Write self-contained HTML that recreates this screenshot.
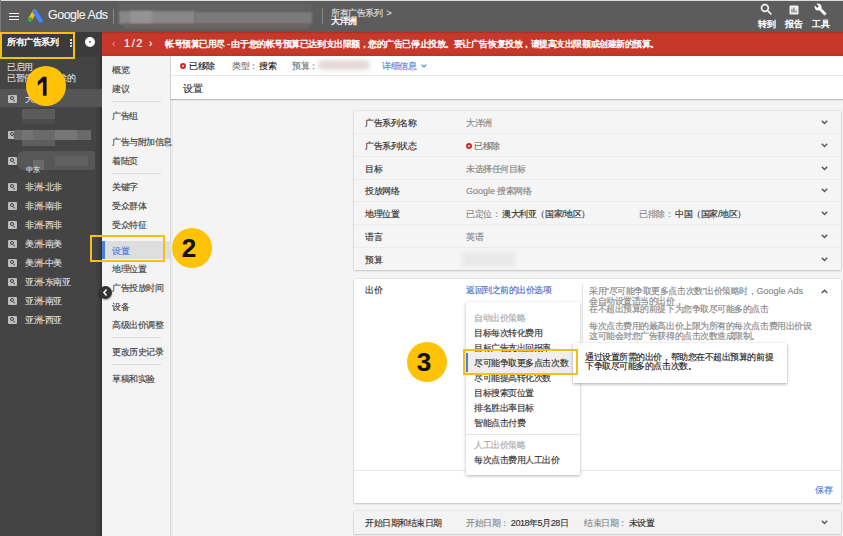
<!DOCTYPE html>
<html><head><meta charset="utf-8">
<style>
*{margin:0;padding:0;box-sizing:border-box}
html,body{width:843px;height:536px;overflow:hidden;background:#f4f4f4}
body{position:relative;font-family:"Liberation Sans",sans-serif;font-size:9px;letter-spacing:-.45px;color:#333;line-height:10.6px;-webkit-text-stroke:.15px currentColor}
.a{position:absolute;white-space:nowrap}
#top{left:0;top:0;width:843px;height:32px;background:#5c5c5c;border-top:1px solid #dedede}
#side{left:0;top:32px;width:102px;height:504px;background:linear-gradient(90deg,#444 0,#444 96px,#383838 101px,#2e2e2e 102px)}
#sidehead{left:0;top:32px;width:102px;height:25px;background:#3b3b3b}
#banner{left:102px;top:32px;width:741px;height:24px;background:linear-gradient(#aa2c20 0,#c6392a 2px,#c6392a 20px,#bd3226 24px);color:#fff}
#nav{left:102px;top:56px;width:69px;height:480px;background:#f4f4f4;border-right:1px solid #dadada;box-shadow:2px 0 0 #ebebeb}
.navi{left:112px;color:#444}
.sep{height:1px;background:#dcdcdc}
.ic{left:8px;width:9px;height:8px;background:#bdbdbd;border-radius:1px}
.ic:after{content:"";position:absolute;left:2.3px;top:1.3px;width:4px;height:4px;border:1.1px solid #444;border-radius:50%;box-sizing:border-box}
.ic:before{content:"";position:absolute;left:5.3px;top:5.3px;width:2px;height:1.3px;background:#444;transform:rotate(45deg)}
.si{left:25px;color:#ddd}
.circ{width:40px;height:40px;border-radius:50%;background:#fec306;color:#111;font-weight:bold;font-size:26px;letter-spacing:0;text-align:center;line-height:40px;text-indent:-6px}
.ybox{border:2px solid #f5bf14}
.row{left:354px;width:487px;height:23px;border-bottom:1px solid #ebebeb}
.lab{left:11px;top:7px;color:#333}
.val{left:112px;top:7px;color:#888}
.chev{right:12px;top:8px;width:6px;height:6px;border-right:1.5px solid #666;border-bottom:1.5px solid #666;transform:rotate(45deg)}
.blur{filter:blur(2px)}
</style></head><body>
<!-- TOP BAR -->
<div id="top" class="a"></div>
<div class="a" style="left:9px;top:13px;width:10px;height:1.3px;background:#eee"></div>
<div class="a" style="left:9px;top:15.8px;width:10px;height:1.3px;background:#eee"></div>
<div class="a" style="left:9px;top:18.6px;width:10px;height:1.3px;background:#eee"></div>
<svg class="a" style="left:26px;top:9px" width="18" height="14" viewBox="0 0 18 14">
 <path d="M8.6 2.6 L4.2 10" stroke="#fbbc04" stroke-width="4.4" stroke-linecap="round"/>
 <path d="M8.6 2.6 L14.6 11.4" stroke="#4285f4" stroke-width="4.4" stroke-linecap="round"/>
 <circle cx="4" cy="10.6" r="2.3" fill="#34a853"/>
</svg>
<div class="a" style="left:48px;top:10px;font-size:12.4px;color:#eee;letter-spacing:-0.45px">Google Ads</div>
<div class="a" style="left:113px;top:9px;width:1px;height:15px;background:#888"></div>
<div class="a" style="left:119px;top:3px;width:193px;height:8px;background:#636363;filter:blur(.8px)"></div>
<div class="a" style="left:119px;top:11px;width:76px;height:13px;background:#888;filter:blur(.8px)"></div>
<div class="a" style="left:130px;top:11px;width:22px;height:13px;background:#939393;filter:blur(.8px)"></div>
<div class="a" style="left:195px;top:12px;width:117px;height:12px;background:#7b7b7b;filter:blur(.8px)"></div>
<div class="a" style="left:124px;top:24px;width:186px;height:5px;background:#6e6363;filter:blur(.8px)"></div>
<div class="a" style="left:322px;top:8px;width:1px;height:16px;background:#888"></div>
<div class="a" style="width:60.2px;text-align-last:justify;left:331px;top:8px;color:#ddd">所有广告系列&nbsp;&nbsp;&gt;</div>
<div class="a" style="width:25.7px;text-align-last:justify;left:331px;top:16px;color:#fff;-webkit-text-stroke:.4px #fff">大洋洲</div>
<!-- right icons -->
<svg class="a" style="left:759px;top:2px" width="15" height="15" viewBox="0 0 24 24"><path fill="#fff" stroke="#fff" stroke-width=".6" d="M15.5 14h-.79l-.28-.27C15.41 12.59 16 11.11 16 9.5 16 5.91 13.09 3 9.5 3S3 5.91 3 9.5 5.91 16 9.5 16c1.61 0 3.09-.59 4.230-1.57l.27.28v.79l5 4.99L20.49 19l-4.99-5zm-6 0C7.010 14 5 11.99 5 9.5S7.01 5 9.5 5 14 7.01 14 9.5 11.99 14 9.5 14z"/></svg>
<svg class="a" style="left:788px;top:4px" width="12" height="12" viewBox="0 0 24 24"><path fill="#eee" d="M19 3H5c-1.1 0-2 .9-2 2v14c0 1.1.9 2 2 2h14c1.1 0 2-.9 2-2V5c0-1.1-.9-2-2-2zM9 17H7v-7h2v7zm4 0h-2V7h2v10zm4 0h-2v-4h2v4z"/></svg>
<svg class="a" style="left:814px;top:3px" width="13" height="13" viewBox="0 0 24 24"><path fill="#fff" d="M22.7 19l-9.1-9.1c.9-2.3.4-5-1.5-6.9-2-2-5-2.4-7.4-1.3L9 6 6 9 1.6 4.7C.4 7.1.9 10.1 2.9 12.1c1.900 1.9 4.6 2.4 6.9 1.5l9.1 9.1c.4.4 1 .4 1.4 0l2.3-2.3c.5-.4.5-1.1.1-1.4z"/></svg>
<div class="a" style="width:17.1px;text-align-last:justify;left:758px;top:19px;color:#fff;-webkit-text-stroke:.4px #fff">转到</div>
<div class="a" style="width:17.1px;text-align-last:justify;left:785px;top:19px;color:#fff;-webkit-text-stroke:.4px #fff">报告</div>
<div class="a" style="width:17.1px;text-align-last:justify;left:812px;top:19px;color:#fff;-webkit-text-stroke:.4px #fff">工具</div>

<!-- SIDEBAR -->
<div id="side" class="a"></div>
<div id="sidehead" class="a"></div>
<div class="a" style="width:51.3px;text-align-last:justify;left:7px;top:37px;color:#fff;-webkit-text-stroke:.4px #fff">所有广告系列</div>
<div class="a" style="left:70px;top:39px;width:2px;height:2px;background:#ddd;box-shadow:0 3px #ddd,0 6px #ddd"></div>
<div class="a" style="left:85px;top:37px;width:10px;height:10px;border-radius:50%;background:#fff"></div>
<div class="a" style="left:89px;top:41px;width:2px;height:2px;background:#666;border-radius:50%"></div>
<div class="a ybox" style="left:0;top:32px;width:75px;height:27px"></div>
<div class="a" style="left:0;top:0;width:1px;height:32px;background:#7a7a7a"></div>

<div class="a si" style="width:25.7px;text-align-last:justify;left:7px;top:62px">已启用</div>
<div class="a si" style="width:68.4px;text-align-last:justify;left:7px;top:73px">已暂停和已移除的</div>
<div class="a" style="left:0;top:89px;width:102px;height:18px;background:#555"></div>
<div class="a ic" style="top:95px"></div>
<div class="a si" style="width:25.7px;text-align-last:justify;top:94px">大洋洲</div>
<div class="a" style="left:22px;top:109px;width:33px;height:10px;background:#5b5b5b;filter:blur(.6px)"></div>
<div class="a" style="left:22px;top:119px;width:33px;height:5px;background:#4c4c4c;filter:blur(.6px)"></div>
<div class="a ic" style="top:131px"></div>
<div class="a" style="left:14px;top:130px;width:77px;height:10px;background:#6a6a6a;filter:blur(.6px)"></div>
<div class="a" style="left:22px;top:130px;width:11px;height:10px;background:#737373;filter:blur(.6px)"></div>
<div class="a" style="left:55px;top:130px;width:22px;height:10px;background:#767676;filter:blur(.6px)"></div>
<div class="a" style="left:22px;top:140px;width:33px;height:6px;background:#5e5e5e;filter:blur(.6px)"></div>
<div class="a ic" style="top:157px"></div>
<div class="a" style="left:17px;top:151px;width:78px;height:19px;background:#575757;border-radius:7px 2px 2px 7px;filter:blur(.6px)"></div>
<div class="a" style="left:33px;top:160px;width:11px;height:10px;background:#6a6a6a;filter:blur(.6px)"></div>
<div class="a" style="left:55px;top:156px;width:33px;height:10px;background:#606060;filter:blur(.6px)"></div>
<div class="a si" style="width:13.1px;text-align-last:justify;left:26px;top:165px;font-size:7px">中东</div>
<div class="a ic" style="top:183px"></div><div class="a si" style="width:36.8px;text-align-last:justify;top:182px">非洲-北非</div>
<div class="a ic" style="top:202px"></div><div class="a si" style="width:36.8px;text-align-last:justify;top:201px">非洲-南非</div>
<div class="a ic" style="top:221px"></div><div class="a si" style="width:36.8px;text-align-last:justify;top:220px">非洲-西非</div>
<div class="a ic" style="top:240px"></div><div class="a si" style="width:36.8px;text-align-last:justify;top:239px">美洲-南美</div>
<div class="a ic" style="top:259px"></div><div class="a si" style="width:36.8px;text-align-last:justify;top:258px">美洲-中美</div>
<div class="a ic" style="top:278px"></div><div class="a si" style="width:45.3px;text-align-last:justify;top:277px">亚洲-东南亚</div>
<div class="a ic" style="top:297px"></div><div class="a si" style="width:36.8px;text-align-last:justify;top:296px">亚洲-南亚</div>
<div class="a ic" style="top:316px"></div><div class="a si" style="width:36.8px;text-align-last:justify;top:315px">亚洲-西亚</div>
<div class="a circ" style="left:26px;top:66px"><svg class="a" style="left:0;top:0" width="40" height="40" viewBox="0 0 40 40"><path d="M16.9 10.7 L20.6 10.7 L20.6 29.8 L16.9 29.8 L16.9 15.6 L11.8 19.7 L11.8 15.4 Z" fill="#111"/></svg></div>

<!-- BANNER -->
<div id="banner" class="a"></div>
<div class="a" style="left:112px;top:39px;color:#e88;font-size:10px;letter-spacing:0">&lsaquo;</div>
<div class="a" style="left:124px;top:38px;color:#fff;font-size:11px;letter-spacing:1.6px">1/2</div>
<div class="a" style="left:149px;top:39px;color:#fff;font-size:10px;letter-spacing:0">&rsaquo;</div>
<div class="a" style="width:494.0px;text-align-last:justify;left:165px;top:39px;color:#fff;-webkit-text-stroke:.4px #fff">帐号预算已用尽 - 由于您的帐号预算已达到支出限额，您的广告已停止投放。要让广告恢复投放，请提高支出限额或创建新的预算。</div>

<!-- NAV -->
<div id="nav" class="a"></div>
<div class="a navi" style="width:17.1px;text-align-last:justify;top:65px">概览</div>
<div class="a navi" style="width:17.1px;text-align-last:justify;top:84px">建议</div>
<div class="a sep" style="left:112px;top:101px;width:49px"></div>
<div class="a navi" style="width:25.7px;text-align-last:justify;top:111px">广告组</div>
<div class="a navi" style="width:59.9px;text-align-last:justify;top:137px">广告与附加信息</div>
<div class="a navi" style="width:25.7px;text-align-last:justify;top:156px">着陆页</div>
<div class="a sep" style="left:112px;top:173px;width:49px"></div>
<div class="a navi" style="width:25.7px;text-align-last:justify;top:182px">关键字</div>
<div class="a navi" style="width:34.2px;text-align-last:justify;top:201px">受众群体</div>
<div class="a navi" style="width:34.2px;text-align-last:justify;top:220px">受众特征</div>
<div class="a" style="left:102px;top:241px;width:68px;height:18px;background:#dedede"></div>
<div class="a" style="left:102px;top:241px;width:3px;height:18px;background:#4a7fe0"></div>
<div class="a navi" style="width:17.1px;text-align-last:justify;top:246px;color:#4a7fe0">设置</div>
<div class="a ybox" style="left:90px;top:235px;width:75px;height:27px"></div>
<div class="a navi" style="width:34.2px;text-align-last:justify;top:264px">地理位置</div>
<div class="a navi" style="width:51.3px;text-align-last:justify;top:283px">广告投放时间</div>
<div class="a navi" style="width:17.1px;text-align-last:justify;top:302px">设备</div>
<div class="a navi" style="width:51.3px;text-align-last:justify;top:320px">高级出价调整</div>
<div class="a sep" style="left:112px;top:337px;width:49px"></div>
<div class="a navi" style="width:51.3px;text-align-last:justify;top:347px">更改历史记录</div>
<div class="a sep" style="left:112px;top:364px;width:49px"></div>
<div class="a navi" style="width:42.8px;text-align-last:justify;top:374px">草稿和实验</div>
<div class="a" style="left:99px;top:286px;width:13px;height:13px;border-radius:50%;background:#333;box-shadow:0 1px 2px rgba(0,0,0,.4)"></div>
<svg class="a" style="left:101px;top:288px" width="9" height="9" viewBox="0 0 9 9"><path d="M5.5 1.5 L3 4.5 L5.5 7.5" fill="none" stroke="#fff" stroke-width="1.6"/></svg>
<div class="a circ" style="left:172px;top:228px">2</div>

<!-- STATUS BAR -->
<div class="a" style="left:171px;top:56px;width:672px;height:43px;background:#fff;box-shadow:0 1px 1px rgba(0,0,0,.25)"></div>
<div class="a" style="left:171px;top:75px;width:672px;height:1px;background:#e6e6e6"></div>
<div class="a" style="left:180px;top:63px;width:6.4px;height:6.4px;border-radius:50%;border:2.3px solid #cc2b2b;background:#fdd"></div>
<div class="a" style="width:25.7px;text-align-last:justify;left:189px;top:61px;color:#222">已移除</div>
<div class="a" style="width:25.7px;text-align-last:justify;left:232px;top:61px;color:#777">类型：</div>
<div class="a" style="width:17.1px;text-align-last:justify;left:259px;top:61px;color:#222">搜索</div>
<div class="a" style="width:25.7px;text-align-last:justify;left:292px;top:61px;color:#777">预算：</div>
<div class="a blur" style="left:318px;top:60px;width:52px;height:10px;background:#e4d8d8;border-radius:5px"></div>
<div class="a" style="width:34.2px;text-align-last:justify;left:382px;top:61px;color:#4a7fe0">详细信息</div>
<svg class="a" style="left:421px;top:64px" width="6" height="4" viewBox="0 0 6 4"><path d="M0.7 0.7 L3 3 L5.3 0.7" stroke="#4a7fe0" stroke-width="1.1" fill="none"/></svg>
<div class="a" style="width:19.1px;text-align-last:justify;left:183px;top:84px;color:#333;font-size:9.5px">设置</div>
<!-- CARD 1 -->
<div class="a" style="left:354px;top:111px;width:487px;height:159px;background:#f5f5f5;box-shadow:0 0 1px rgba(0,0,0,.3),0 1px 2px rgba(0,0,0,.15)"></div>
<div class="a row" style="top:111px"><div class="a lab" style="width:51.3px;text-align-last:justify">广告系列名称</div><div class="a val" style="width:25.7px;text-align-last:justify">大洋洲</div><svg class="a" style="left:467px;top:9px" width="7" height="5" viewBox="0 0 7 5"><path d="M0.8 0.8 L3.5 3.6 L6.2 0.8" stroke="#555" stroke-width="1.4" fill="none"/></svg></div>
<div class="a row" style="top:134px"><div class="a lab" style="width:51.3px;text-align-last:justify">广告系列状态</div><div class="a" style="left:112px;top:9px;width:6.4px;height:6.4px;border-radius:50%;border:2.3px solid #cc2b2b;background:#fdd"></div><div class="a val" style="width:25.7px;text-align-last:justify;left:120px;color:#777">已移除</div><svg class="a" style="left:467px;top:9px" width="7" height="5" viewBox="0 0 7 5"><path d="M0.8 0.8 L3.5 3.6 L6.2 0.8" stroke="#555" stroke-width="1.4" fill="none"/></svg></div>
<div class="a row" style="top:157px"><div class="a lab" style="width:17.1px;text-align-last:justify">目标</div><div class="a val" style="width:59.9px;text-align-last:justify">未选择任何目标</div><svg class="a" style="left:467px;top:9px" width="7" height="5" viewBox="0 0 7 5"><path d="M0.8 0.8 L3.5 3.6 L6.2 0.8" stroke="#555" stroke-width="1.4" fill="none"/></svg></div>
<div class="a row" style="top:179px"><div class="a lab" style="width:34.2px;text-align-last:justify">投放网络</div><div class="a val" style="width:65.3px;text-align-last:justify"><span style="letter-spacing:0">Google</span> 搜索网络</div><svg class="a" style="left:467px;top:9px" width="7" height="5" viewBox="0 0 7 5"><path d="M0.8 0.8 L3.5 3.6 L6.2 0.8" stroke="#555" stroke-width="1.4" fill="none"/></svg></div>
<div class="a row" style="top:202px"><div class="a lab" style="width:34.2px;text-align-last:justify">地理位置</div><div class="a val" style="width:123.8px;text-align-last:justify">已定位： <span style="color:#333">澳大利亚（国家/地区）</span></div><div class="a val" style="width:106.7px;text-align-last:justify;left:285px">已排除： <span style="color:#333">中国（国家/地区）</span></div><svg class="a" style="left:467px;top:9px" width="7" height="5" viewBox="0 0 7 5"><path d="M0.8 0.8 L3.5 3.6 L6.2 0.8" stroke="#555" stroke-width="1.4" fill="none"/></svg></div>
<div class="a row" style="top:225px"><div class="a lab" style="width:17.1px;text-align-last:justify">语言</div><div class="a val" style="width:17.1px;text-align-last:justify">英语</div><svg class="a" style="left:467px;top:9px" width="7" height="5" viewBox="0 0 7 5"><path d="M0.8 0.8 L3.5 3.6 L6.2 0.8" stroke="#555" stroke-width="1.4" fill="none"/></svg></div>
<div class="a row" style="top:248px;height:22px;border-bottom:0"><div class="a lab" style="width:17.1px;text-align-last:justify">预算</div><div class="a blur" style="left:109px;top:4px;width:52px;height:14px;background:#e8e8e8"></div><svg class="a" style="left:467px;top:9px" width="7" height="5" viewBox="0 0 7 5"><path d="M0.8 0.8 L3.5 3.6 L6.2 0.8" stroke="#555" stroke-width="1.4" fill="none"/></svg></div>

<!-- CARD 2 -->
<div class="a" style="left:354px;top:279px;width:487px;height:224px;background:#fff;box-shadow:0 0 1px rgba(0,0,0,.3),0 1px 2px rgba(0,0,0,.15)"></div>
<div class="a" style="width:17.1px;text-align-last:justify;left:365px;top:285px;color:#333">出价</div>
<div class="a" style="width:85.5px;text-align-last:justify;left:466px;top:285px;color:#4a6fc8">返回到之前的出价选项</div>
<div class="a" style="left:582px;top:284px;width:1px;height:57px;background:#e4e4e4"></div>
<div class="a" style="width:214.1px;text-align-last:justify;left:589px;top:286px;color:#888">采用“尽可能争取更多点击次数”出价策略时，<span style="letter-spacing:0">Google Ads</span></div>
<div class="a" style="width:94.1px;text-align-last:justify;left:589px;top:296px;color:#888">会自动设置适当的出价，</div>
<div class="a" style="width:179.6px;text-align-last:justify;left:589px;top:304px;color:#888">在不超出预算的前提下为您争取尽可能多的点击</div>
<div class="a" style="width:222.3px;text-align-last:justify;left:589px;top:321px;color:#888">每次点击费用的最高出价上限为所有的每次点击费用出价设</div>
<div class="a" style="width:171.0px;text-align-last:justify;left:589px;top:331px;color:#888">这可能会对您广告获得的点击次数造成限制。</div>
<svg class="a" style="left:821px;top:289px" width="7" height="5" viewBox="0 0 7 5"><path d="M0.8 4 L3.5 1.2 L6.2 4" stroke="#555" stroke-width="1.4" fill="none"/></svg>
<div class="a" style="left:354px;top:470px;width:487px;height:1px;background:#e6e6e6"></div>
<div class="a" style="width:17.1px;text-align-last:justify;left:815px;top:485px;color:#4a7fe0">保存</div>

<!-- DROPDOWN -->
<div class="a" style="left:466px;top:302px;width:114px;height:173px;background:#fff;box-shadow:0 1px 3px rgba(0,0,0,.3)"></div>
<div class="a" style="width:51.3px;text-align-last:justify;left:474px;top:313px;color:#aaa">自动出价策略</div>
<div class="a" style="width:68.4px;text-align-last:justify;left:474px;top:328px;color:#333">目标每次转化费用</div>
<div class="a" style="width:77.0px;text-align-last:justify;left:474px;top:343px;color:#333">目标广告支出回报率</div>
<div class="a" style="left:466px;top:352px;width:114px;height:21px;background:#eee"></div>
<div class="a" style="left:466px;top:353px;width:2px;height:19px;background:#4a7fe0"></div>
<div class="a" style="width:94.1px;text-align-last:justify;left:474px;top:358px;color:#333">尽可能争取更多点击次数</div>
<div class="a" style="width:77.0px;text-align-last:justify;left:474px;top:373px;color:#333">尽可能提高转化次数</div>
<div class="a" style="width:59.9px;text-align-last:justify;left:474px;top:388px;color:#333">目标搜索页位置</div>
<div class="a" style="width:59.9px;text-align-last:justify;left:474px;top:403px;color:#333">排名胜出率目标</div>
<div class="a" style="width:51.3px;text-align-last:justify;left:474px;top:418px;color:#333">智能点击付费</div>
<div class="a" style="left:466px;top:434px;width:114px;height:1px;background:#e4e4e4"></div>
<div class="a" style="width:51.3px;text-align-last:justify;left:474px;top:440px;color:#aaa">人工出价策略</div>
<div class="a" style="width:85.5px;text-align-last:justify;left:474px;top:455px;color:#333">每次点击费用人工出价</div>

<!-- TOOLTIP -->
<div class="a" style="left:573px;top:343px;width:214px;height:40px;background:#fff;box-shadow:0 1px 3px rgba(0,0,0,.35)"></div>
<div class="a" style="width:188.1px;text-align-last:justify;left:585px;top:352px;color:#222">通过设置所需的出价，帮助您在不超出预算的前提</div>
<div class="a" style="width:111.2px;text-align-last:justify;left:585px;top:361px;color:#222">下争取尽可能多的点击次数。</div>

<div class="a ybox" style="left:463px;top:349px;width:115px;height:26px"></div>
<div class="a circ" style="left:407px;top:342px">3</div>

<!-- CARD 3 -->
<div class="a" style="left:354px;top:511px;width:487px;height:23px;background:#f3f3f3;box-shadow:0 0 1px rgba(0,0,0,.3),0 1px 2px rgba(0,0,0,.15)"></div>
<div class="a" style="width:77.0px;text-align-last:justify;left:365px;top:518px;color:#333">开始日期和结束日期</div>
<div class="a" style="width:102.4px;text-align-last:justify;left:466px;top:518px;color:#888">开始日期： <span style="color:#333">2018年5月28日</span></div>
<div class="a" style="width:70.5px;text-align-last:justify;left:584px;top:518px;color:#888">结束日期： <span style="color:#333">未设置</span></div>
<svg class="a" style="left:821px;top:520px" width="7" height="5" viewBox="0 0 7 5"><path d="M0.8 0.8 L3.5 3.6 L6.2 0.8" stroke="#555" stroke-width="1.4" fill="none"/></svg>
</body></html>
